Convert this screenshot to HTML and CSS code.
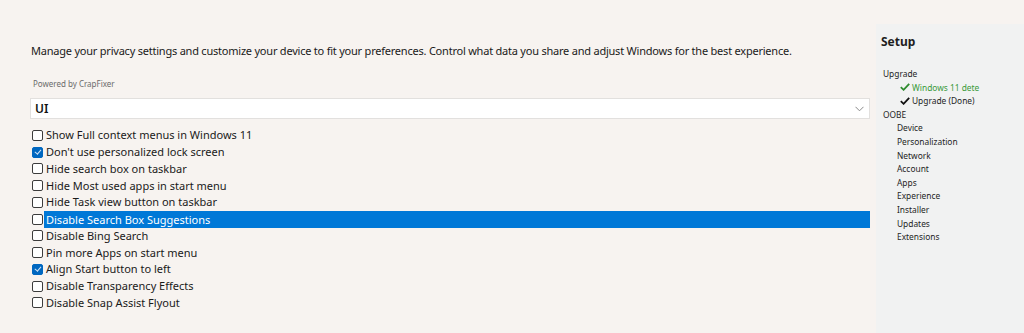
FILE: index.html
```html
<!DOCTYPE html>
<html>
<head>
<meta charset="utf-8">
<link rel="stylesheet" href="styles.css">
</head>
<body>
<div class="app">
  <main class="main">
    <p class="desc">Manage your privacy settings and customize your device to fit your preferences. Control what data you share and adjust Windows for the best experience.</p>
    <div class="powered">Powered by CrapFixer</div>
    <div class="select">
      <span class="select-text">UI</span>
      <svg class="chev" width="9" height="6" viewBox="0 0 9 6"><path d="M0.5 0.8 L4.5 4.8 L8.5 0.8" fill="none" stroke="#8a8a8a" stroke-width="1"/></svg>
    </div>
    <ul class="list">
      <li class="row"><span class="cb"></span><span class="lbl">Show Full context menus in Windows 11</span></li>
      <li class="row"><span class="cb on"></span><span class="lbl">Don't use personalized lock screen</span></li>
      <li class="row"><span class="cb"></span><span class="lbl">Hide search box on taskbar</span></li>
      <li class="row"><span class="cb"></span><span class="lbl">Hide Most used apps in start menu</span></li>
      <li class="row"><span class="cb"></span><span class="lbl">Hide Task view button on taskbar</span></li>
      <li class="row sel"><span class="cb"></span><span class="lbl">Disable Search Box Suggestions</span></li>
      <li class="row"><span class="cb"></span><span class="lbl">Disable Bing Search</span></li>
      <li class="row"><span class="cb"></span><span class="lbl">Pin more Apps on start menu</span></li>
      <li class="row"><span class="cb on"></span><span class="lbl">Align Start button to left</span></li>
      <li class="row"><span class="cb"></span><span class="lbl">Disable Transparency Effects</span></li>
      <li class="row"><span class="cb"></span><span class="lbl">Disable Snap Assist Flyout</span></li>
    </ul>
  </main>
  <aside class="side">
    <h2 class="side-title">Setup</h2>
    <div class="grp">Upgrade</div>
    <div class="item done green"><svg class="tick" width="10" height="8" viewBox="0 0 10 8"><path d="M0.8 4.2 L3.6 6.8 L9.2 0.8" fill="none" stroke="#2e8b2e" stroke-width="1.8"/></svg>Windows 11 dete</div>
    <div class="item done"><svg class="tick" width="10" height="8" viewBox="0 0 10 8"><path d="M0.8 4.2 L3.6 6.8 L9.2 0.8" fill="none" stroke="#111" stroke-width="1.8"/></svg>Upgrade (Done)</div>
    <div class="grp">OOBE</div>
    <div class="item">Device</div>
    <div class="item">Personalization</div>
    <div class="item">Network</div>
    <div class="item">Account</div>
    <div class="item">Apps</div>
    <div class="item">Experience</div>
    <div class="item">Installer</div>
    <div class="item">Updates</div>
    <div class="item">Extensions</div>
  </aside>
</div>
</body>
</html>
```

FILE: styles.css
```css
html, body {
  margin: 0;
  padding: 0;
  height: 100%;
}
body {
  background: #f7f3f0;
  font-family: "Noto Sans", "Open Sans", sans-serif;
  color: #1a1a1a;
  overflow: hidden;
}
.app {
  display: flex;
  height: 333px;
}
.main {
  width: 840px;
  padding: 43px 6px 0 30px;
  flex: none;
}
.desc {
  margin: 0 0 0 1px;
  font-size: 11px;
  letter-spacing: -0.22px;
  line-height: 16px;
  white-space: nowrap;
}
.powered {
  margin: 19px 0 0 3px;
  font-size: 8px;
  line-height: 12px;
  color: #6b6b6b;
}
.select {
  margin-top: 8px;
  height: 19px;
  background: #fff;
  border: 1px solid #e2e0de;
  display: flex;
  align-items: center;
  justify-content: space-between;
  padding: 0 4px 0 4px;
}
.select-text {
  font-size: 12px;
  font-weight: 600;
  color: #111;
}
.chev {
  margin-right: 1px;
}
.list {
  list-style: none;
  margin: 8px 0 0 0;
  padding: 0;
}
.row {
  display: flex;
  align-items: center;
  height: 16.75px;
  padding-left: 2px;
}
.cb {
  width: 9px;
  height: 9px;
  border: 1px solid #3c3c3c;
  border-radius: 2px;
  background: #fff;
  flex: none;
  position: relative;
}
.cb.on {
  background: #0067c0;
  border-color: #0067c0;
}
.cb.on::after {
  content: "";
  position: absolute;
  left: 2.5px;
  top: 0.5px;
  width: 2.5px;
  height: 5px;
  border: solid #cfe3f7;
  border-width: 0 1px 1px 0;
  transform: rotate(40deg);
}
.lbl {
  margin-left: 1px;
  padding-left: 2px;
  font-size: 11px;
  line-height: 16px;
  white-space: nowrap;
}
.row.sel .lbl {
  flex: 1;
  background: #0078d7;
  color: #fff;
  height: 17px;
  line-height: 17px;
}
.side {
  flex: 1;
  margin-top: 24px;
  background: #f1f2f2;
  padding: 10px 0 0 5px;
  font-size: 8.4px;
  color: #1e1e1e;
}
.side-title {
  margin: 0 0 17px 0;
  font-size: 12px;
  font-weight: 700;
  line-height: 16px;
}
.grp {
  margin-left: 2px;
  height: 13.6px;
  line-height: 13.6px;
}
.item {
  margin-left: 16px;
  height: 13.6px;
  line-height: 13.6px;
  white-space: nowrap;
  display: flex;
  align-items: center;
}
.item.done {
  margin-left: 19px;
}
.item.green {
  color: #3a9a3a;
}
.tick {
  margin-right: 2px;
  flex: none;
}
```
